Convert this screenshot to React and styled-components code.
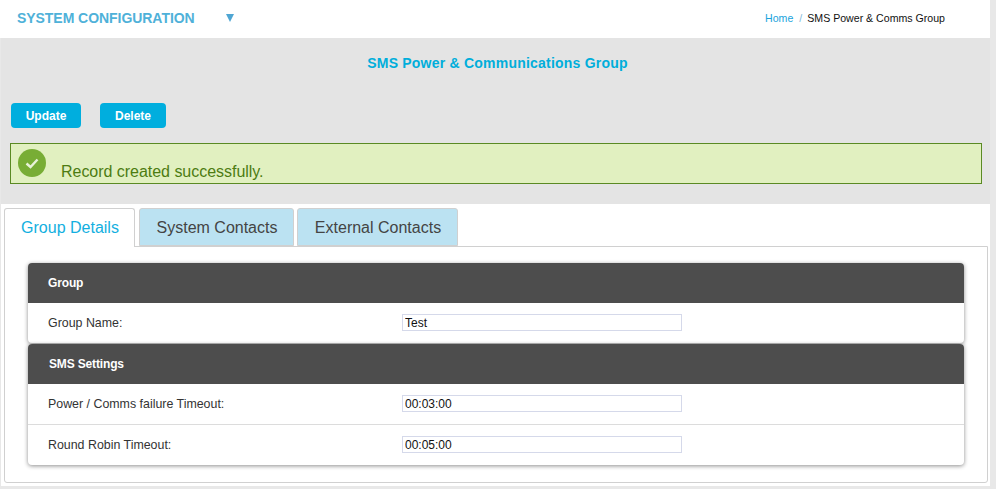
import React from 'react'
import styled, { createGlobalStyle } from 'styled-components'

const GlobalStyle = createGlobalStyle`
  html, body {
    margin: 0;
    padding: 0;
    height: 489px;
    overflow: hidden;
    background: #e8e8e8;
  }
  * {
    box-sizing: border-box;
  }
`

const Page = styled.div`
  width: 990px;
  height: 489px;
  font-family: "Liberation Sans", Arial, sans-serif;
  display: flex;
  flex-direction: column;
`

const TopBar = styled.div`
  height: 38px;
  background: #fff;
  display: flex;
  align-items: center;
  padding: 0 45px 2px 17px;
`

const SectionTitle = styled.div`
  font-size: 14px;
  font-weight: bold;
  color: #4fb1d9;
  letter-spacing: -0.05px;
`

const Caret = styled.svg`
  width: 8px;
  height: 8px;
  margin-left: 31px;
  fill: #4fa6d3;
`

const Breadcrumb = styled.div`
  margin-left: auto;
  font-size: 10.6px;
  display: flex;
  color: #111;
`

const Crumb = styled.span`
  color: ${p => (p.$link ? '#1aa3dc' : '#111')};
`

const Slash = styled.span`
  color: #7fb9d9;
  margin: 0 5px 0 6px;
`

const Band = styled.div`
  height: 166px;
  background: #e4e4e4;
  padding: 17px 8px 0 10px;
  margin-left: 1px;
  display: flex;
  flex-direction: column;
`

const PageHeading = styled.div`
  font-size: 14px;
  line-height: 16px;
  font-weight: bold;
  color: #00aedb;
  text-align: center;
  padding-left: 2px;
  letter-spacing: 0.22px;
`

const Actions = styled.div`
  display: flex;
  gap: 19px;
  margin-top: 32px;
`

const ActionButton = styled.button`
  width: ${p => p.$width}px;
  height: 25px;
  border: 0;
  border-radius: 4px;
  padding: 0;
  background: #00aede;
  color: #fff;
  font-family: inherit;
  font-size: 12px;
  font-weight: bold;
`

const Banner = styled.div`
  height: 41px;
  margin-top: 15px;
  margin-left: -1px;
  background: #e1f0c0;
  border: 1px solid #5a8a23;
  display: flex;
  padding: 5px 0 0 7px;
`

const CheckBadge = styled.svg`
  width: 28px;
  height: 28px;
  flex: none;
`

const BannerText = styled.div`
  font-size: 16px;
  line-height: 18px;
  color: #4d7c12;
  letter-spacing: -0.03px;
  margin: 14px 0 0 15px;
`

const Content = styled.div`
  flex: 1;
  background: #fff;
  margin-bottom: 3px;
  margin-left: 1px;
  padding: 4px 2px 3px 3px;
  display: flex;
  flex-direction: column;
`

const TabRow = styled.div`
  display: flex;
  gap: 4px;
  height: 38px;
  position: relative;
  z-index: 1;
`

const Tab = styled.div`
  width: ${p => p.$width}px;
  margin-right: ${p => (p.$tight ? -1 : 0)}px;
  height: ${p => (p.$active ? 39 : 38)}px;
  border: 1px solid #d0d0d0;
  border-bottom: ${p => (p.$active ? '0' : '1px solid #d0d0d0')};
  border-radius: 3px 3px 0 0;
  background: ${p => (p.$active ? '#fff' : '#bbe2f2')};
  color: ${p => (p.$active ? '#12afe0' : '#444')};
  font-size: 16px;
  line-height: 37px;
  text-align: center;
  padding-left: 1px;
`

const TabPanel = styled.div`
  flex: 1;
  border: 1px solid #d0d0d0;
  border-radius: 0 0 3px 3px;
  padding: 16px 23px 0 23px;
  display: flex;
  flex-direction: column;
  gap: 1px;
`

const Card = styled.section`
  background: #fff;
  border-radius: 4px;
  box-shadow: 0 1px 4px rgba(0, 0, 0, 0.45);
  overflow: hidden;
`

const CardHeader = styled.h3`
  margin: 0;
  height: 40px;
  background: #4d4d4d;
  color: #fff;
  font-size: 12px;
  letter-spacing: -0.15px;
  font-weight: bold;
  line-height: 40px;
  padding-left: ${p => (p.$inset ? 21 : 20)}px;
`

const FieldRow = styled.div`
  height: ${p => (p.$ruled ? 41 : 40)}px;
  display: flex;
  align-items: flex-start;
  padding: 11px 0 0 20px;
  border-bottom: ${p => (p.$ruled ? '1px solid #dcdcdc' : '0')};
`

const FieldLabel = styled.label`
  width: 354px;
  font-size: 12.4px;
  line-height: 18px;
  color: #333;
`

const FieldInput = styled.input`
  width: 280px;
  height: 17px;
  border: 1px solid #d5d9ea;
  background: #fff;
  padding: 0 2px;
  font-family: inherit;
  font-size: 12px;
  color: #111;
  outline: none;
`

const Field = ({ label, value, ruled }) => (
  <FieldRow $ruled={ruled}>
    <FieldLabel>{label}</FieldLabel>
    <FieldInput readOnly value={value} />
  </FieldRow>
)

const App = () => (
  <Page>
    <GlobalStyle />
    <TopBar>
      <SectionTitle>SYSTEM CONFIGURATION</SectionTitle>
      <Caret viewBox='0 0 8 8'>
        <path d='M0 0h8L4 8z' />
      </Caret>
      <Breadcrumb>
        <Crumb $link>Home</Crumb>
        <Slash>/</Slash>
        <Crumb>SMS Power &amp; Comms Group</Crumb>
      </Breadcrumb>
    </TopBar>
    <Band>
      <PageHeading>SMS Power &amp; Communications Group</PageHeading>
      <Actions>
        <ActionButton $width={70}>Update</ActionButton>
        <ActionButton $width={66}>Delete</ActionButton>
      </Actions>
      <Banner>
        <CheckBadge viewBox='0 0 28 28'>
          <circle cx='14' cy='14' r='14' fill='#78ad35' />
          <path d='M8.5 14.5l4 3.5 7-7.5' fill='none' stroke='#e8f2d8' strokeWidth='2.4' />
        </CheckBadge>
        <BannerText>Record created successfully.</BannerText>
      </Banner>
    </Band>
    <Content>
      <TabRow>
        <Tab $active $width={131}>Group Details</Tab>
        <Tab $width={155} $tight>System Contacts</Tab>
        <Tab $width={161}>External Contacts</Tab>
      </TabRow>
      <TabPanel>
        <Card>
          <CardHeader>Group</CardHeader>
          <Field label='Group Name:' value='Test' />
        </Card>
        <Card>
          <CardHeader $inset>SMS Settings</CardHeader>
          <Field ruled label='Power / Comms failure Timeout:' value='00:03:00' />
          <Field label='Round Robin Timeout:' value='00:05:00' />
        </Card>
      </TabPanel>
    </Content>
  </Page>
)

export default App
